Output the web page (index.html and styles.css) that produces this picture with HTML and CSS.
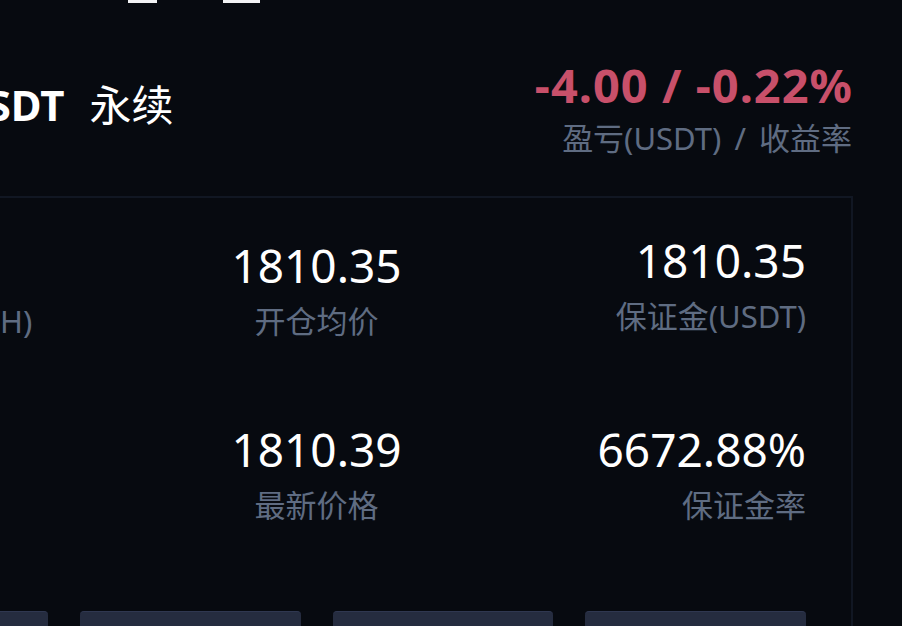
FILE: index.html
```html
<!DOCTYPE html>
<html lang="zh-CN">
<head>
<meta charset="utf-8">
<title>持仓</title>
<link rel="stylesheet" href="styles.css">
</head>
<body>
<div class="page">
  <div class="topbar">
    <span class="tab-mark tab-mark-a"></span>
    <span class="tab-mark tab-mark-b"></span>
  </div>
  <div class="header">
    <div class="title">
      <span class="coin"></span>
      <span class="symbol">ETHUSDT</span>
      <span class="kind">永续</span>
    </div>
    <div class="pnl">
      <div class="pnl-value">-4.00 / -0.22%</div>
      <div class="pnl-label">盈亏(USDT) / 收益率</div>
    </div>
  </div>
  <div class="card">
    <div class="grid">
      <div class="cell cell-start">
        <div class="value">1.00</div>
        <div class="label">持仓数量&#8201;(ETH)</div>
      </div>
      <div class="cell cell-center">
        <div class="value">1810.35</div>
        <div class="label">开仓均价</div>
      </div>
      <div class="cell cell-end cell-raised">
        <div class="value">1810.35</div>
        <div class="label">保证金(USDT)</div>
      </div>
      <div class="cell cell-start">
        <div class="value">20x</div>
        <div class="label">杠杆</div>
      </div>
      <div class="cell cell-center">
        <div class="value">1810.39</div>
        <div class="label">最新价格</div>
      </div>
      <div class="cell cell-end">
        <div class="value">6672.88%</div>
        <div class="label">保证金率</div>
      </div>
    </div>
    <div class="actions">
      <button class="btn">止盈止损</button>
      <button class="btn">调整杠杆</button>
      <button class="btn">调整保证金</button>
      <button class="btn">平仓</button>
    </div>
  </div>
</div>
</body>
</html>
```
FILE: styles.css
```css
html, body {
  margin: 0;
  padding: 0;
  background: #070a10;
  overflow: hidden;
  width: 902px;
  height: 626px;
}
body {
  font-family: "Noto Sans", "Noto Sans CJK SC", sans-serif;
  color: #ffffff;
}
.page {
  width: 1073px;
  margin-left: -220px;
}
.topbar {
  height: 3px;
  display: flex;
  padding-left: 348px;
}
.tab-mark {
  height: 3px;
  background: #f2f3f5;
}
.tab-mark-a { width: 29px; }
.tab-mark-b { width: 37px; margin-left: 66px; }

.header {
  display: flex;
  justify-content: space-between;
  align-items: flex-start;
  padding: 55px 1px 0 47px;
  height: 193px;
  box-sizing: border-box;
}
.title {
  display: flex;
  align-items: center;
  gap: 24px;
  margin-top: 19px;
  line-height: 56px;
}
.coin {
  width: 25px;
  height: 52px;
}
.symbol {
  font-size: 42px;
  font-weight: 700;
}
.kind {
  font-size: 42px;
  margin-left: 1px;
}
.pnl {
  text-align: right;
}
.pnl-value {
  font-size: 47px;
  font-weight: 700;
  line-height: 54px;
  letter-spacing: 1px;
  margin-right: -1px;
  color: #c8506a;
}
.pnl-label {
  margin-top: 8px;
  font-size: 31px;
  line-height: 36px;
  word-spacing: 5px;
  color: #5f6c82;
}

.card {
  border: 2px solid #111723;
  border-bottom: none;
  padding: 40px 45px 0 45px;
  height: 500px;
}
.grid {
  display: grid;
  grid-template-columns: 1fr 1fr 1fr;
  row-gap: 83px;
}
.cell {
  display: flex;
  flex-direction: column;
}
.cell-start { align-items: flex-start; }
.cell-center { align-items: center; }
.cell-end { align-items: flex-end; }
.cell-raised { margin-top: -5px; }
.value {
  font-size: 46px;
  line-height: 54px;
  color: #ffffff;
}
.label {
  margin-top: 11px;
  font-size: 31px;
  line-height: 36px;
  color: #5f6c82;
}
.actions {
  display: flex;
  gap: 32px;
  margin-top: 88px;
}
.btn {
  flex: 1;
  height: 72px;
  border: none;
  border-top: 1px solid #2f3750;
  border-radius: 4px;
  background: #252c3f;
  color: #ffffff;
  font-family: inherit;
  font-size: 30px;
}
```
